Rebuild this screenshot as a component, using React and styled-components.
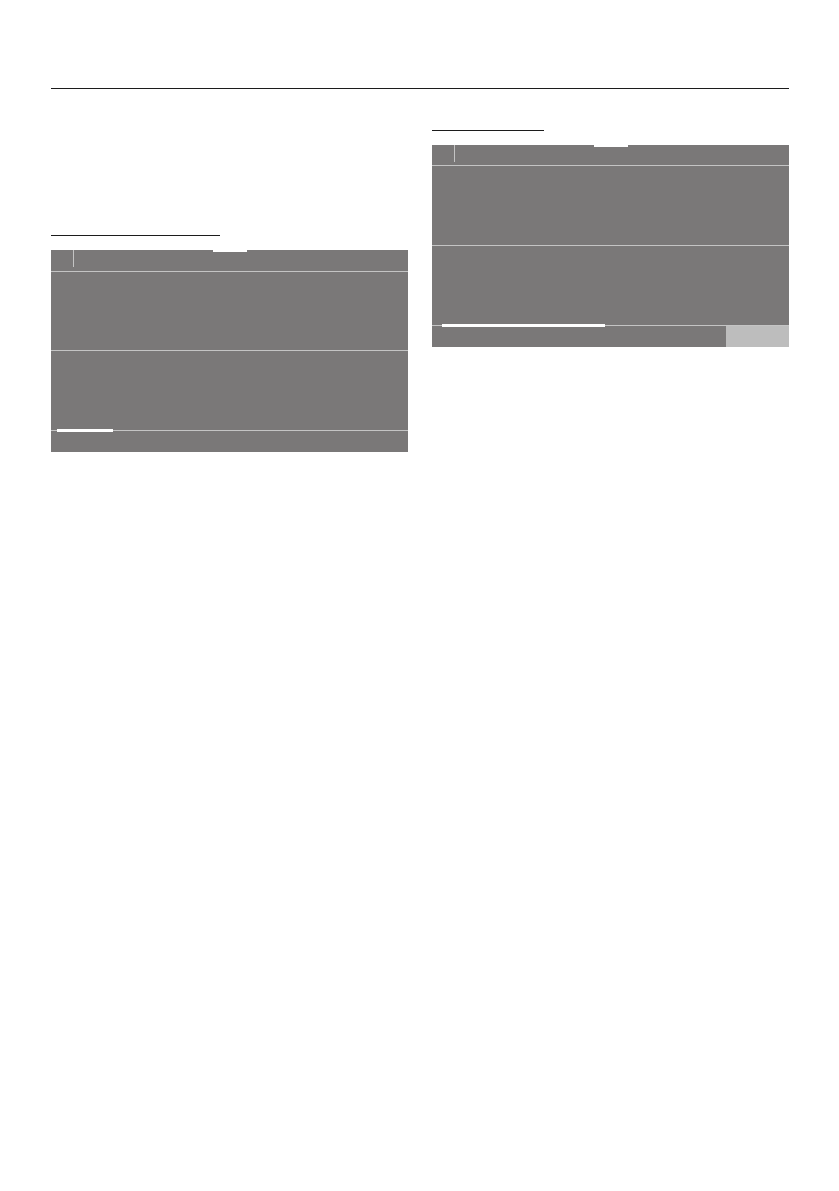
import styled, { createGlobalStyle } from "styled-components";

const Global = createGlobalStyle`
  body {
    margin: 0;
    background: #fff;
    font-family: "Liberation Sans", Arial, sans-serif;
  }
`;

const Page = styled.div`
  width: 839px;
  min-height: 1191px;
  padding-top: 88px;
  box-sizing: border-box;
`;

const Rule = styled.div`
  margin-left: 51px;
  width: 738px;
  height: 1px;
  background: #1c1c1c;
`;

const Columns = styled.div`
  display: grid;
  grid-template-columns: 357px 357px;
  column-gap: 24px;
  margin-left: 51px;
  align-items: start;
`;

const Column = styled.div`
  display: flex;
  flex-direction: column;
  padding-top: ${(p) => p.$top}px;
`;

const Heading = styled.div`
  width: ${(p) => p.$width}px;
  height: 1px;
  background: #1c1c1c;
  margin-bottom: 14px;
`;

const Panel = styled.div`
  position: relative;
  display: flex;
  flex-direction: column;
  background: #7a7878;
`;

const Notch = styled.div`
  position: absolute;
  top: 0;
  left: ${(p) => p.$left}px;
  width: 34px;
  height: 2px;
  background: #fff;
`;

const HeadRow = styled.div`
  display: flex;
  height: ${(p) => p.$height}px;
`;

const Cell = styled.div`
  width: 22px;
  height: 17px;
  border-right: 1px solid #c4c4c4;
`;

const Line = styled.div`
  position: relative;
  height: 1px;
  background: #c4c4c4;
`;

const Mark = styled.div`
  position: absolute;
  left: ${(p) => p.$left}px;
  top: -1px;
  width: ${(p) => p.$width}px;
  height: 3px;
  background: #fff;
`;

const Row = styled.div`
  height: ${(p) => p.$height}px;
`;

const Footer = styled.div`
  display: flex;
  justify-content: flex-end;
  height: 21px;
`;

const Key = styled.div`
  width: 63px;
  background: #bdbdbd;
`;

function Table({ head, rows, notch, mark, keyBox }) {
  return (
    <Panel>
      <Notch $left={notch} />
      <HeadRow $height={head}>
        <Cell />
      </HeadRow>
      <Line />
      <Row $height={rows[0]} />
      <Line />
      <Row $height={rows[1]} />
      <Line>
        <Mark $left={mark.left} $width={mark.width} />
      </Line>
      <Footer>{keyBox && <Key />}</Footer>
    </Panel>
  );
}

export default function App() {
  return (
    <Page>
      <Global />
      <Rule />
      <Columns>
        <Column $top={146}>
          <Heading $width={169} />
          <Table
            head={21}
            rows={[78, 79]}
            notch={162}
            mark={{ left: 6, width: 56 }}
          />
        </Column>
        <Column $top={41}>
          <Heading $width={112} />
          <Table
            head={20}
            rows={[79, 79]}
            notch={162}
            mark={{ left: 10, width: 163 }}
            keyBox
          />
        </Column>
      </Columns>
    </Page>
  );
}
